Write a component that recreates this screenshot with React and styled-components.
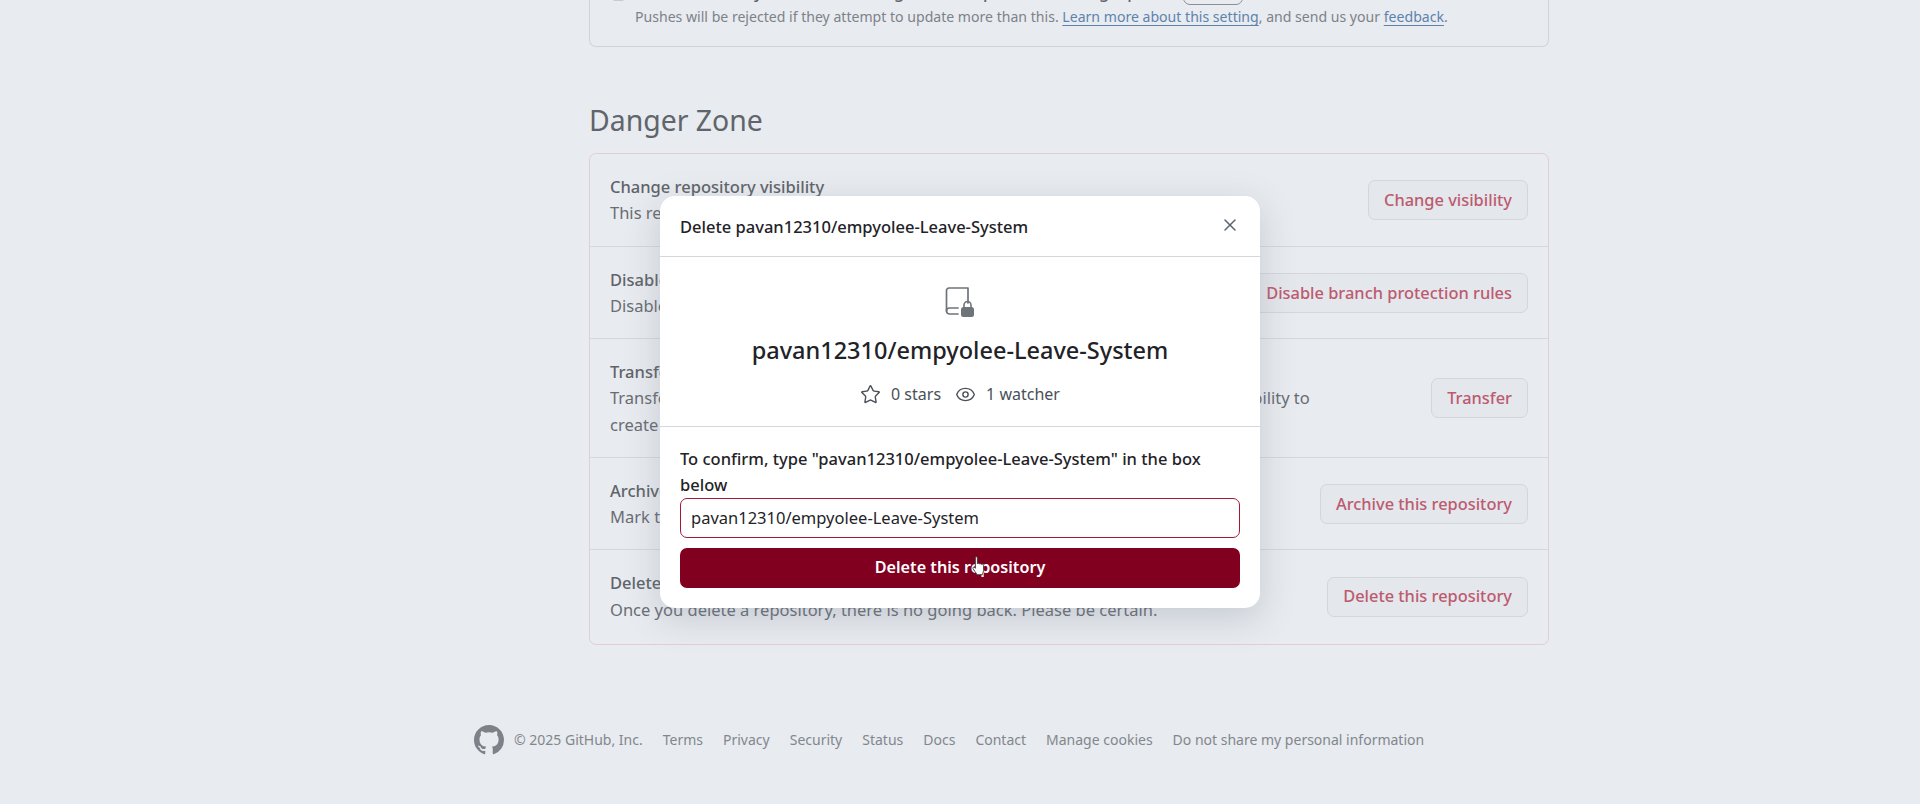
import React from "react";
import styled, { createGlobalStyle } from "styled-components";
import { Star, Eye, X } from "lucide-react";

const Global = createGlobalStyle`
  html, body { margin: 0; padding: 0; height: 100%; background: #e8ebef; overflow: hidden; }
  * { box-sizing: border-box; }
  body { font-family: "Noto Sans", "Open Sans", sans-serif; color: #686d73; font-size: 16.5px; line-height: 26.25px; }
`;

const Viewport = styled.div`
  position: relative;
  height: 804px;
  overflow: hidden;
`;
const Column = styled.main`
  width: 960px;
  margin-left: 589px;
`;
const TopCard = styled.section`
  height: 75px;
  margin-top: -28px;
  border: 1px solid #d0d4d9;
  border-top: 0;
  border-radius: 0 0 7px 7px;
  padding-left: 45px;
  color: #7d8288;
`;
const LimitRow = styled.div`
  display: flex;
  align-items: flex-end;
  gap: 12px;
  height: 33px;
  margin-left: -23px;
  font-weight: 500;
  color: #5f646a;
`;
const LimitCheck = styled.span`
  flex: none;
  width: 13px;
  height: 13px;
  margin-bottom: 4px;
  border: 1px solid #c8ccd1;
  border-radius: 3px;
`;
const LimitInput = styled.span`
  flex: none;
  width: 60px;
  height: 30px;
  margin-left: auto;
  margin-right: 305px;
  border: 1px solid #8a8f95;
  border-radius: 7px;
`;
const PushNote = styled.div`
  margin-top: -1px;
  font-size: 14.08px;
  line-height: 26px;
`;
const Link = styled.a`
  color: #5d83ad;
  text-decoration: underline;
  text-underline-offset: 3px;
`;
const Heading = styled.h2`
  margin: 53px 0 0;
  font-size: 28.4px;
  line-height: 40px;
  font-weight: 400;
  color: #60646b;
`;
const DangerBox = styled.section`
  margin-top: 13px;
  border: 1px solid #e3cdd4;
  border-radius: 7px;
`;
const Row = styled.div`
  display: flex;
  align-items: center;
  justify-content: space-between;
  gap: 20px;
  padding: 20px 20px ${(p) => (p.$last ? "21px" : "19px")};
  border-top: ${(p) => (p.$first ? "0" : "1px solid #d4d8dd")};
`;
const RowText = styled.div`
  flex: 1 1 0;
  min-width: 0;
  max-width: 748px;
`;
const RowTitle = styled.div`
  font-weight: 500;
  color: #5f646a;
`;
const DangerButton = styled.button`
  flex: none;
  height: 40px;
  padding: 0 15px;
  font: inherit;
  font-size: 16.4px;
  font-weight: 500;
  color: #bd5a70;
  background: #e4e7eb;
  border: 1px solid #d3d7dc;
  border-radius: 7px;
`;
const Footer = styled.footer`
  display: flex;
  align-items: center;
  gap: 20px;
  margin-top: 80px;
  padding-left: 474px;
  font-size: 14px;
  color: #82878d;
`;
const Brand = styled.div`
  display: flex;
  align-items: center;
  gap: 10px;
`;
const Modal = styled.div`
  position: absolute;
  left: 660px;
  top: 196px;
  width: 600px;
  background: #fff;
  border-radius: 15px;
  box-shadow: 0 10px 34px rgba(120, 130, 145, 0.3);
  color: #1f2328;
`;
const ModalHeader = styled.header`
  display: flex;
  align-items: center;
  justify-content: space-between;
  height: 61px;
  padding: 2px 20px 0;
  border-bottom: 1px solid #d4d8dd;
  font-weight: 500;
`;
const CloseButton = styled.button`
  display: flex;
  padding: 0;
  margin: -4px 0 0;
  border: 0;
  background: none;
  color: #59636e;
`;
const ModalRepo = styled.div`
  display: flex;
  flex-direction: column;
  align-items: center;
  height: 170px;
  padding-top: 29px;
  border-bottom: 1px solid #d4d8dd;
`;
const RepoName = styled.h3`
  margin: 14px 0 0;
  font-size: 23.5px;
  line-height: 36px;
  font-weight: 500;
`;
const Stats = styled.div`
  display: flex;
  align-items: center;
  margin-top: 13px;
  font-size: 16px;
  color: #4a5058;
`;
const Stat = styled.span`
  display: flex;
  align-items: center;
  gap: 10px;
  margin-left: ${(p) => (p.$spaced ? "14px" : "0")};
`;
const ModalForm = styled.div`
  padding: 19px 20px 20px;
`;
const ConfirmLabel = styled.label`
  display: block;
  font-weight: 500;
`;
const ConfirmInput = styled.input`
  display: block;
  width: 100%;
  height: 40px;
  margin-top: -1px;
  padding: 0 10px;
  font: inherit;
  font-weight: 400;
  color: #1f2328;
  background: #fff;
  border: 1px solid #a5183c;
  border-radius: 7px;
  outline: none;
`;
const ConfirmButton = styled.button`
  display: block;
  width: 100%;
  height: 40px;
  margin-top: 10px;
  font: inherit;
  font-size: 16.2px;
  font-weight: 600;
  color: #fff;
  background: #82001f;
  border: 0;
  border-radius: 7px;
`;
const Cursor = styled.svg`
  position: absolute;
  left: 971px;
  top: 556px;
`;

const rows = [
  ["Change repository visibility", "This repository is currently private.", "Change visibility"],
  ["Disable branch protection rules", "Disable branch protection rules enforcement and APIs", "Disable branch protection rules"],
  ["Transfer ownership", "Transfer this repository to another user or to an organization where you have the ability to create repositories.", "Transfer"],
  ["Archive this repository", "Mark this repository as archived and read-only.", "Archive this repository"],
  ["Delete this repository", "Once you delete a repository, there is no going back. Please be certain.", "Delete this repository"],
];
const footerLinks = ["Terms", "Privacy", "Security", "Status", "Docs", "Contact", "Manage cookies", "Do not share my personal information"];
const repo = "pavan12310/empyolee-Leave-System";

const GitHubMark = () => (
  <svg width="30" height="30" viewBox="0 0 16 16" fill="#7d8289">
    <path d="M8 0C3.58 0 0 3.58 0 8c0 3.54 2.29 6.53 5.47 7.59.4.07.55-.17.55-.38 0-.19-.01-.82-.01-1.49-2.01.37-2.53-.49-2.69-.94-.09-.23-.48-.94-.82-1.13-.28-.15-.68-.52-.01-.53.63-.01 1.08.58 1.23.82.72 1.21 1.87.87 2.33.66.07-.52.28-.87.51-1.07-1.78-.2-3.64-.89-3.64-3.95 0-.87.31-1.59.82-2.15-.08-.2-.36-1.02.08-2.12 0 0 .67-.21 2.2.82.64-.18 1.32-.27 2-.27s1.36.09 2 .27c1.53-1.04 2.2-.82 2.2-.82.44 1.1.16 1.92.08 2.12.51.56.82 1.27.82 2.15 0 3.07-1.87 3.75-3.65 3.95.29.25.54.73.54 1.48 0 1.07-.01 1.93-.01 2.2 0 .21.15.46.55.38A8.01 8.01 0 0 0 16 8c0-4.42-3.58-8-8-8z" />
  </svg>
);

const RepoLockIcon = () => (
  <svg width="30" height="32" viewBox="0 0 30 32" fill="none" stroke="#6f7479" strokeWidth="1.7" strokeLinecap="round" strokeLinejoin="round">
    <path d="M23 17V2H4a2.5 2.5 0 0 0-2.5 2.5V25a3 3 0 0 0 3 3H13" />
    <path d="M1.5 25a3 3 0 0 1 3-3H13" />
    <rect x="16" y="21" width="13" height="10" rx="2.5" fill="#6f7479" stroke="none" />
    <path d="M19 21v-2a3.5 3.5 0 0 1 7 0v2" strokeWidth="1.6" />
  </svg>
);

const HandCursor = () => (
  <Cursor width="16" height="22" viewBox="0 0 22 30">
    <path
      d="M6 2.2c0-1.6 2.8-1.6 2.8 0v8.2c1-.9 2.4-.6 2.9.4.9-.7 2.3-.4 2.8.6.9-.5 2.5-.1 2.6 1.4l.2 6.6c0 2.2-.8 3.4-1.6 4.8v1.4H7.6v-1.4c-1.6-2-3.3-4.4-4.8-7-.8-1.4.8-2.8 2.2-1.4l1 1z"
      fill="#fff"
      stroke="#333"
      strokeWidth="1.2"
      strokeLinejoin="round"
    />
  </Cursor>
);

export default function App() {
  return (
    <Viewport>
      <Global />
      <Column>
        <TopCard>
          <LimitRow>
            <LimitCheck />
            <span>Limit how many branches and tags can be updated in a single push</span>
            <LimitInput />
          </LimitRow>
          <PushNote>
            Pushes will be rejected if they attempt to update more than this. <Link>Learn more about this setting</Link>, and send us your <Link>feedback</Link>.
          </PushNote>
        </TopCard>
        <Heading>Danger Zone</Heading>
        <DangerBox>
          {rows.map(([title, text, action], i) => (
            <Row key={title} $first={i === 0} $last={i === rows.length - 1}>
              <RowText>
                <RowTitle>{title}</RowTitle>
                {text}
              </RowText>
              <DangerButton>{action}</DangerButton>
            </Row>
          ))}
        </DangerBox>
      </Column>
      <Footer>
        <Brand>
          <GitHubMark />
          <span>© 2025 GitHub, Inc.</span>
        </Brand>
        {footerLinks.map((l) => (
          <span key={l}>{l}</span>
        ))}
      </Footer>
      <Modal>
        <ModalHeader>
          <span>Delete {repo}</span>
          <CloseButton aria-label="Close">
            <X size={20} strokeWidth={1.8} />
          </CloseButton>
        </ModalHeader>
        <ModalRepo>
          <RepoLockIcon />
          <RepoName>{repo}</RepoName>
          <Stats>
            <Stat>
              <Star size={21} strokeWidth={1.6} />0 stars
            </Stat>
            <Stat $spaced>
              <Eye size={21} strokeWidth={1.6} />1 watcher
            </Stat>
          </Stats>
        </ModalRepo>
        <ModalForm>
          <ConfirmLabel>To confirm, type "{repo}" in the box below</ConfirmLabel>
          <ConfirmInput readOnly value={repo} />
          <ConfirmButton>Delete this repository</ConfirmButton>
        </ModalForm>
      </Modal>
      <HandCursor />
    </Viewport>
  );
}
